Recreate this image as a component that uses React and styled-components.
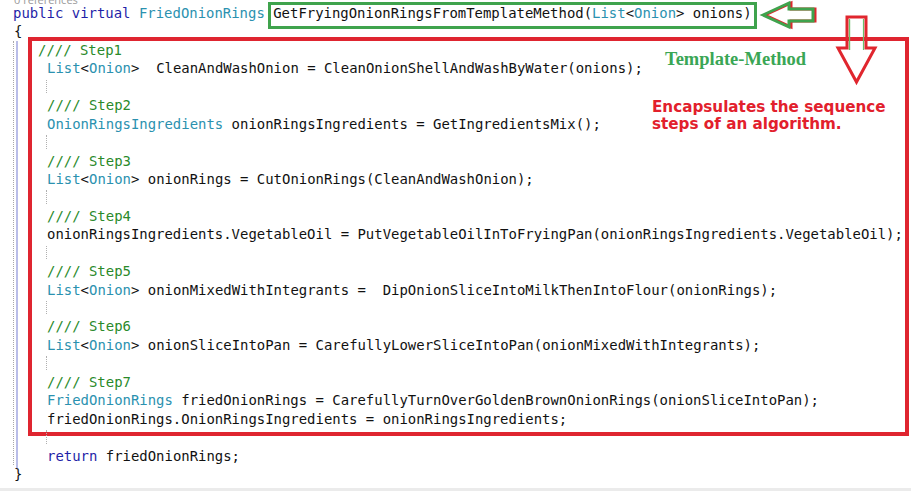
import React from "react";
import styled, { createGlobalStyle } from "styled-components";

const Global = createGlobalStyle`
  html, body { margin: 0; padding: 0; background: #fff; }
  #root { width: 911px; height: 491px; overflow: hidden; }
`;

const Page = styled.div`
  position: relative;
  width: 911px;
  height: 491px;
  display: flex;
  flex-direction: column;
  background: #fff;
  font-family: "DejaVu Sans Mono", "Liberation Mono", monospace;
  font-size: 13.95px;
  color: #111;
`;

const CodeLens = styled.div`
  height: 4px;
  overflow: hidden;
  padding-left: 14px;
  display: flex;
  align-items: flex-end;
  font-family: "Open Sans", "DejaVu Sans", sans-serif;
  font-size: 11px;
  line-height: 11px;
  color: #9a9a9a;
  & > span { display: block; margin-bottom: -1px; }
`;

const Code = styled.div`
  display: flex;
  flex-direction: column;
  padding-left: 13px;
`;

const Line = styled.div`
  height: 18.44px;
  line-height: 18.44px;
  white-space: pre;
  padding-left: ${(p) => p.$indent || 0}px;
`;

const Blank = styled.div`
  position: relative;
  height: 18.44px;
  &::before {
    content: "";
    position: absolute;
    left: ${(p) => (p.$indent || 0) - 1}px;
    top: 2px;
    bottom: 3px;
    border-left: 1px dotted #b0b0b0;
  }
`;

const Tok = styled.span`
  color: ${(p) =>
    p.$k === "kw"
      ? "#1f1fa8"
      : p.$k === "type"
      ? "#2b91af"
      : p.$k === "cm"
      ? "#2a8a2a"
      : "#111"};
`;

const Highlight = styled.span`
  margin-left: -5px;
  padding: 0 2px 5px 2px;
  border: 3px solid #3fa34d;
`;

const Body = styled.div`
  position: relative;
  border-left: 1px dotted #a8a8a8;
  &::before {
    content: "";
    position: absolute;
    left: 2px;
    top: 0;
    bottom: -3px;
    width: 2px;
    background: #b9bde8;
  }
`;

const RedBox = styled.div`
  margin: -4px 2px -8px 14px;
  padding-bottom: 4px;
  border: 4px solid #df2530;
`;

const Footer = styled.div`
  margin-top: auto;
  height: 3px;
  background: #ebebeb;
`;

const Overlay = styled.div`
  position: absolute;
  left: ${(p) => p.$x}px;
  top: ${(p) => p.$y}px;
`;

const TemplateLabel = styled.div`
  font-family: "Liberation Serif", "Times New Roman", serif;
  font-weight: bold;
  font-size: 18.5px;
  line-height: 1;
  color: #3aa655;
  white-space: nowrap;
`;

const NoteLabel = styled.div`
  font-family: "DejaVu Sans", Verdana, sans-serif;
  font-weight: bold;
  font-size: 15.2px;
  line-height: 17.5px;
  color: #e2202c;
  white-space: nowrap;
`;

const T = ({ k, children }) => <Tok $k={k}>{children}</Tok>;
const ListOnion = () => (
  <>
    <T k="type">List</T>&lt;<T k="type">Onion</T>&gt;
  </>
);

const LeftArrow = () => (
  <svg width="62" height="32" viewBox="0 0 62 32">
    <polygon
      points="5,15 31,3 31,9 55,9 55,21 31,21 31,27"
      fill="none"
      stroke="#e0262e"
      strokeWidth="3"
      strokeLinejoin="miter"
      transform="translate(2,0)"
    />
    <polygon
      points="5,15 31,3 31,9 55,9 55,21 31,21 31,27"
      fill="none"
      stroke="#3fa34d"
      strokeWidth="3"
      strokeLinejoin="miter"
    />
  </svg>
);

const DownArrow = () => (
  <svg width="46" height="72" viewBox="0 0 46 72">
    <polyline
      points="15.5,6 15.5,36 M"
      fill="none"
      stroke="#5cb85c"
      strokeWidth="1.2"
    />
    <line x1="15.5" y1="5" x2="15.5" y2="36" stroke="#6bbf6b" strokeWidth="1.2" />
    <line x1="29.5" y1="5" x2="29.5" y2="36" stroke="#6bbf6b" strokeWidth="1.2" />
    <polygon
      points="13,3 32,3 32,34 41,34 22.5,68 4,34 13,34"
      fill="none"
      stroke="#e0262e"
      strokeWidth="3"
      strokeLinejoin="miter"
    />
  </svg>
);

export default function App() {
  return (
    <>
      <Global />
      <Page>
        <CodeLens>
          <span>0 references</span>
        </CodeLens>
        <Code>
          <Line>
            <T k="kw">public</T> <T k="kw">virtual</T> <T k="type">FriedOnionRings</T>{" "}
            <Highlight>
              GetFryingOnionRingsFromTemplateMethod(<ListOnion /> onions)
            </Highlight>
          </Line>
          <Line $indent={1}>{"{"}</Line>
          <Body>
            <RedBox>
              <Line $indent={6}>
                <T k="cm">//// Step1</T>
              </Line>
              <Line $indent={15}>
                <ListOnion />
                {"  CleanAndWashOnion = CleanOnionShellAndWashByWater(onions);"}
              </Line>
              <Blank $indent={15} />
              <Line $indent={15}>
                <T k="cm">//// Step2</T>
              </Line>
              <Line $indent={15}>
                <T k="type">OnionRingsIngredients</T>
                {" onionRingsIngredients = GetIngredientsMix();"}
              </Line>
              <Blank $indent={15} />
              <Line $indent={15}>
                <T k="cm">//// Step3</T>
              </Line>
              <Line $indent={15}>
                <ListOnion />
                {" onionRings = CutOnionRings(CleanAndWashOnion);"}
              </Line>
              <Blank $indent={15} />
              <Line $indent={15}>
                <T k="cm">//// Step4</T>
              </Line>
              <Line $indent={15}>
                {"onionRingsIngredients.VegetableOil = PutVegetableOilInToFryingPan(onionRingsIngredients.VegetableOil);"}
              </Line>
              <Blank $indent={15} />
              <Line $indent={15}>
                <T k="cm">//// Step5</T>
              </Line>
              <Line $indent={15}>
                <ListOnion />
                {" onionMixedWithIntegrants =  DipOnionSliceIntoMilkThenIntoFlour(onionRings);"}
              </Line>
              <Blank $indent={15} />
              <Line $indent={15}>
                <T k="cm">//// Step6</T>
              </Line>
              <Line $indent={15}>
                <ListOnion />
                {" onionSliceIntoPan = CarefullyLowerSliceIntoPan(onionMixedWithIntegrants);"}
              </Line>
              <Blank $indent={15} />
              <Line $indent={15}>
                <T k="cm">//// Step7</T>
              </Line>
              <Line $indent={15}>
                <T k="type">FriedOnionRings</T>
                {" friedOnionRings = CarefullyTurnOverGoldenBrownOnionRings(onionSliceIntoPan);"}
              </Line>
              <Line $indent={15}>
                {"friedOnionRings.OnionRingsIngredients = onionRingsIngredients;"}
              </Line>
            </RedBox>
            <Blank $indent={33} />
            <Line $indent={33}>
              <T k="kw">return</T> friedOnionRings;
            </Line>
          </Body>
          <Line $indent={1}>{"}"}</Line>
        </Code>
        <Footer />

        <Overlay $x={758} $y={0}>
          <LeftArrow />
        </Overlay>
        <Overlay $x={834} $y={14}>
          <DownArrow />
        </Overlay>
        <Overlay $x={665} $y={49.5}>
          <TemplateLabel>Template-Method</TemplateLabel>
        </Overlay>
        <Overlay $x={652} $y={98.5}>
          <NoteLabel>
            Encapsulates the sequence
            <br />
            steps of an algorithm.
          </NoteLabel>
        </Overlay>
      </Page>
    </>
  );
}
